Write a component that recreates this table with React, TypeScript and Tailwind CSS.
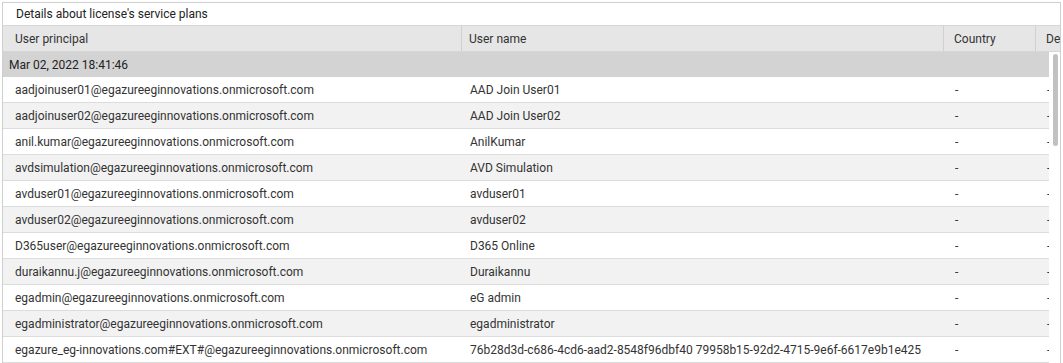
import React from 'react';

const rows: [string, string][] = [
  ['aadjoinuser01@egazureeginnovations.onmicrosoft.com', 'AAD Join User01'],
  ['aadjoinuser02@egazureeginnovations.onmicrosoft.com', 'AAD Join User02'],
  ['anil.kumar@egazureeginnovations.onmicrosoft.com', 'AnilKumar'],
  ['avdsimulation@egazureeginnovations.onmicrosoft.com', 'AVD Simulation'],
  ['avduser01@egazureeginnovations.onmicrosoft.com', 'avduser01'],
  ['avduser02@egazureeginnovations.onmicrosoft.com', 'avduser02'],
  ['D365user@egazureeginnovations.onmicrosoft.com', 'D365 Online'],
  ['duraikannu.j@egazureeginnovations.onmicrosoft.com', 'Duraikannu'],
  ['egadmin@egazureeginnovations.onmicrosoft.com', 'eG admin'],
  ['egadministrator@egazureeginnovations.onmicrosoft.com', 'egadministrator'],
  ['egazure_eg-innovations.com#EXT#@egazureeginnovations.onmicrosoft.com', '76b28d3d-c686-4cd6-aad2-8548f96dbf40 79958b15-92d2-4715-9e6f-6617e9b1e425'],
];

export default function App() {
  return (
    <div className="h-[363px] w-[1063px] overflow-hidden bg-white pl-[2px] pt-[2px] font-['Roboto',sans-serif] text-[12px] text-[#333]">
      <div className="w-[1059px] border border-[#cfcfcf] bg-white">
        {/* Title */}
        <div className="flex h-[22px] items-center pl-[13px] text-[#222]">Details about license's service plans</div>

        {/* Column headers */}
        <div className="flex h-[27px] border-y border-[#d6d6d6] bg-[#e6e6e6]">
          <div className="flex w-[459px] shrink-0 items-center border-r border-[#d0d0d0] pl-[12px]">User principal</div>
          <div className="flex w-[482px] shrink-0 items-center border-r border-[#d0d0d0] pl-[7px]">User name</div>
          <div className="flex w-[92px] shrink-0 items-center border-r border-[#d0d0d0] pl-[10px]">Country</div>
          <div className="flex flex-1 items-center overflow-hidden whitespace-nowrap pl-[10px]">De</div>
        </div>

        {/* Body with scrollbar */}
        <div className="flex">
          <div className="w-[1046px] shrink-0 overflow-hidden">
            <div className="flex h-[25px] items-center bg-[#d3d3d3] pl-[6px] text-[#222]">Mar 02, 2022 18:41:46</div>
            {rows.map(([principal, name], i) => (
              <div
                key={principal}
                className={`flex h-[26px] items-center border-b border-[#dcdcdc] whitespace-nowrap ${i % 2 === 1 ? 'bg-[#f2f2f2]' : 'bg-white'}`}
              >
                <div className="w-[460px] shrink-0 pl-[12px]">{principal}</div>
                <div className="w-[482px] shrink-0 pl-[7px]">{name}</div>
                <div className="w-[92px] shrink-0 pl-[10px]">-</div>
                <div className="flex-1 pl-[10px]">-</div>
              </div>
            ))}
          </div>
          <div className="flex-1 bg-white pt-[2px]">
            <div className="ml-[4px] h-[92px] w-[5px] rounded-full bg-[#c1c1c1]" />
          </div>
        </div>
      </div>
    </div>
  );
}
